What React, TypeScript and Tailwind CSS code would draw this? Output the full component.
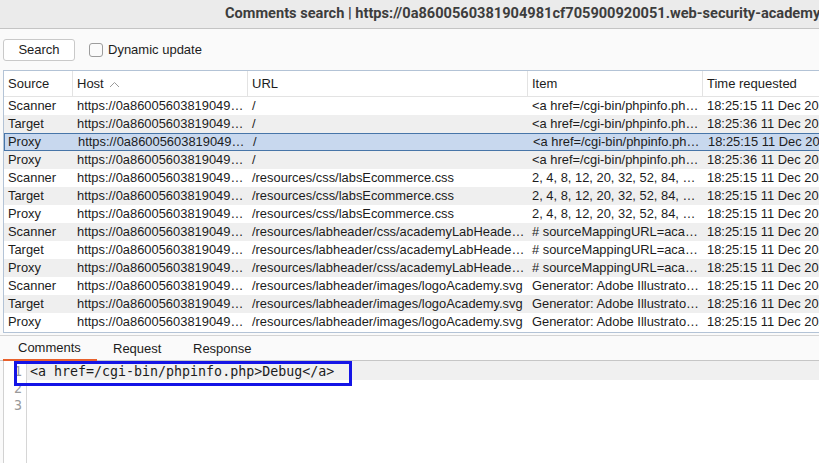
const HOST = 'https://0a8600560381904981cf705900920051.web-security-academy.net';
const DEBUG = '<a href=/cgi-bin/phpinfo.php>Debug</a>';
const FIB = '2, 4, 8, 12, 20, 32, 52, 84, 136, 220, 356, 576, 932';
const MAP = '# sourceMappingURL=academyLabHeader.css.map';
const GEN = 'Generator: Adobe Illustrator 23.0.2, SVG Export Plug-In . SVG Version: 6.00 Build 0)';

const rows = [
  { source: 'Scanner', url: '/', item: DEBUG, time: '18:25:15 11 Dec 2023' },
  { source: 'Target', url: '/', item: DEBUG, time: '18:25:36 11 Dec 2023' },
  { source: 'Proxy', url: '/', item: DEBUG, time: '18:25:15 11 Dec 2023' },
  { source: 'Proxy', url: '/', item: DEBUG, time: '18:25:36 11 Dec 2023' },
  { source: 'Scanner', url: '/resources/css/labsEcommerce.css', item: FIB, time: '18:25:15 11 Dec 2023' },
  { source: 'Target', url: '/resources/css/labsEcommerce.css', item: FIB, time: '18:25:15 11 Dec 2023' },
  { source: 'Proxy', url: '/resources/css/labsEcommerce.css', item: FIB, time: '18:25:15 11 Dec 2023' },
  { source: 'Scanner', url: '/resources/labheader/css/academyLabHeader.css', item: MAP, time: '18:25:15 11 Dec 2023' },
  { source: 'Target', url: '/resources/labheader/css/academyLabHeader.css', item: MAP, time: '18:25:15 11 Dec 2023' },
  { source: 'Proxy', url: '/resources/labheader/css/academyLabHeader.css', item: MAP, time: '18:25:15 11 Dec 2023' },
  { source: 'Scanner', url: '/resources/labheader/images/logoAcademy.svg', item: GEN, time: '18:25:15 11 Dec 2023' },
  { source: 'Target', url: '/resources/labheader/images/logoAcademy.svg', item: GEN, time: '18:25:16 11 Dec 2023' },
  { source: 'Proxy', url: '/resources/labheader/images/logoAcademy.svg', item: GEN, time: '18:25:15 11 Dec 2023' },
];

const SELECTED = 2;

function Cell({ children, className = '' }: { children: React.ReactNode; className?: string }) {
  return (
    <div className={`pl-[4px] pr-[1px] overflow-hidden text-ellipsis whitespace-nowrap ${className}`}>{children}</div>
  );
}

export default function App() {
  return (
    <div
      className="w-[819px] h-[463px] overflow-hidden bg-[#fafafa] flex flex-col text-[13px] text-[#1c1c1c]"
      style={{ fontFamily: '"Liberation Sans", Arial, sans-serif' }}
    >
      {/* title bar */}
      <div className="h-[29px] shrink-0 bg-[#ebebeb] border-b border-[#c4c4c4] flex items-center pl-[225px] overflow-hidden">
        <span
          className="whitespace-nowrap font-bold text-[14.6px] text-[#3d3d3d]"
          style={{ fontFamily: 'Roboto, "Noto Sans", sans-serif' }}
        >
          Comments search | {HOST}
        </span>
      </div>

      {/* toolbar */}
      <div className="h-[41px] shrink-0 flex items-center pl-[3px] gap-[14px]">
        <button className="w-[72px] h-[22px] bg-white border border-[#c9c9c9] rounded-[3px] text-[13px] text-[#1c1c1c] flex items-center justify-center">
          Search
        </button>
        <label className="flex items-center gap-[5px]">
          <span className="w-[14px] h-[14px] border border-[#9c9c9c] rounded-[3px] bg-[#fafafa]" />
          <span>Dynamic update</span>
        </label>
      </div>

      {/* table */}
      <div className="ml-[3px] h-[263px] shrink-0 border-t border-l border-b border-[#b3c3d6] bg-white flex flex-col overflow-hidden text-[12.9px]">
        <div className="h-[26px] shrink-0 grid grid-cols-[69px_175px_280px_175px_200px] border-b border-[#e3e3e3] bg-white text-[13px]">
          <div className="px-[4px] flex items-center border-r border-[#e3e3e3]">Source</div>
          <div className="px-[4px] flex items-center gap-[5px] border-r border-[#e3e3e3]">
            Host
            <svg width="11" height="7" viewBox="0 0 11 7" className="mt-[1px]">
              <polyline points="1,6 5.5,1.5 10,6" fill="none" stroke="#9a9a9a" strokeWidth="1" />
            </svg>
          </div>
          <div className="px-[4px] flex items-center border-r border-[#e3e3e3]">URL</div>
          <div className="px-[4px] flex items-center border-r border-[#e3e3e3]">Item</div>
          <div className="px-[4px] flex items-center whitespace-nowrap">Time requested</div>
        </div>
        <div className="flex flex-col">
          {rows.map((r, i) => {
            const bg =
              i === SELECTED
                ? 'bg-[#c8d8ee] border-y border-l border-[#4775a8]'
                : i % 2 === 1
                  ? 'bg-[#efefef]'
                  : 'bg-white';
            return (
              <div
                key={i}
                className={`h-[18px] grid grid-cols-[69px_175px_280px_175px_200px] items-center ${bg}`}
              >
                <Cell className={i === SELECTED ? '-ml-px' : ''}>{r.source}</Cell>
                <Cell>{HOST}</Cell>
                <Cell>{r.url}</Cell>
                <Cell>{r.item}</Cell>
                <Cell className="text-clip">{r.time}</Cell>
              </div>
            );
          })}
        </div>
      </div>

      {/* bottom panel */}
      <div className="mt-[2px] border-t border-[#d4d4d4] h-[26px] shrink-0 flex items-stretch border-b border-b-[#c6c6c6] pl-[3px]">
        <div className="w-[94px] pl-[15px] pt-[1px] flex items-center border-b-2 border-[#e8612c] mb-[-1px]">Comments</div>
        <div className="w-[80px] pl-[16px] pt-[1px] flex items-center">Request</div>
        <div className="w-[90px] pl-[16px] pt-[1px] flex items-center">Response</div>
      </div>

      <div
        className="relative flex-1 ml-[3px] border-l border-[#d2d2d2] bg-white flex text-[13.3px]"
        style={{ fontFamily: '"DejaVu Sans Mono", "Liberation Mono", monospace' }}
      >
        <div className="w-[23px] border-r border-[#d6d6d6] flex flex-col items-end pr-[4px] text-[#9a9a9a] leading-[17px] pt-[2px]">
          <div>1</div>
          <div>2</div>
          <div>3</div>
        </div>
        <div className="flex-1 flex flex-col leading-[17px] pt-[2px]">
          <div className="bg-[#f0f0f0] pl-[3px] -mt-[2px] pt-[2px] h-[19px] whitespace-nowrap">{DEBUG}</div>
          <div className="h-[17px]" />
          <div className="h-[17px]" />
        </div>
        <div className="absolute left-[10px] top-0 w-[338px] h-[25px] border-[3px] border-[#1414e6]" />
      </div>
    </div>
  );
}
